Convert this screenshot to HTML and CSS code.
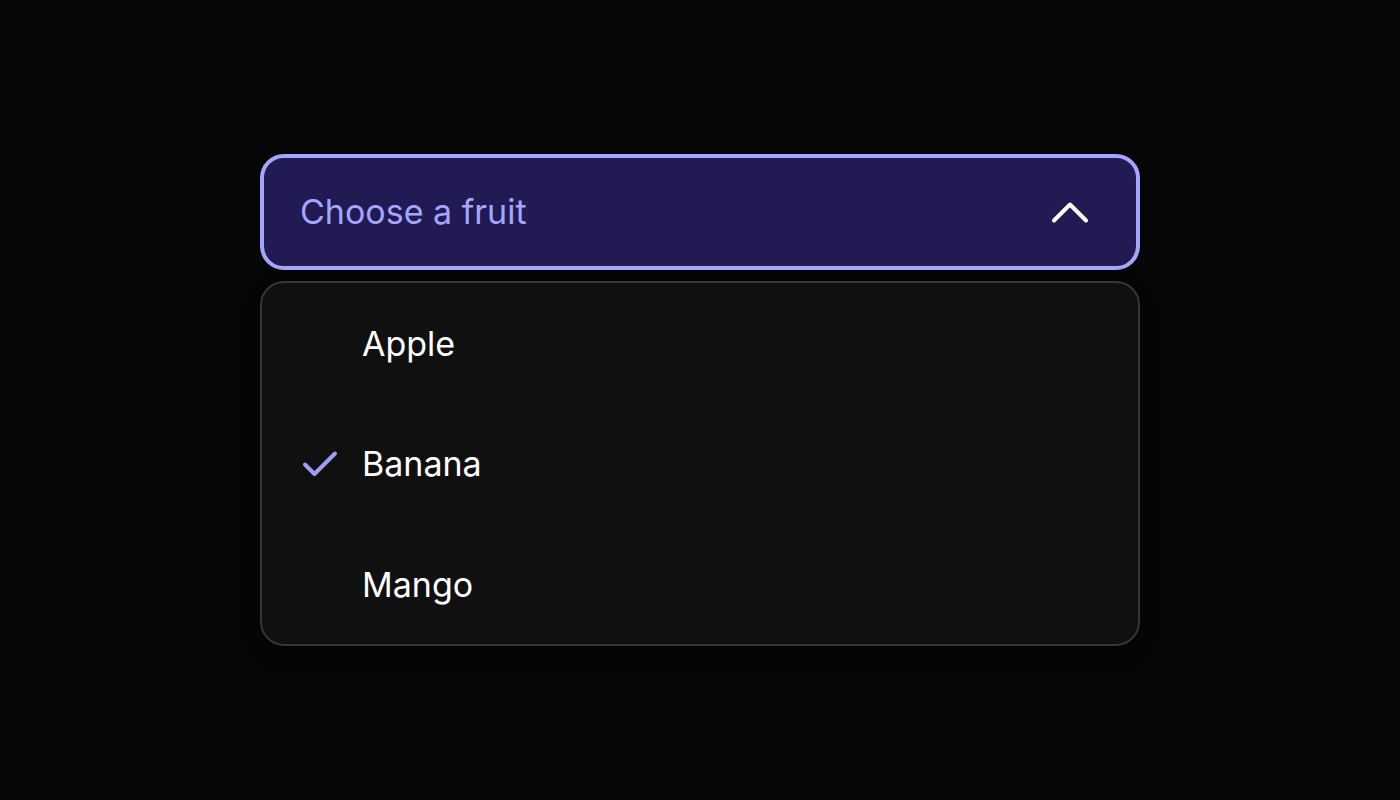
FILE: index.html
```html
<!DOCTYPE html>
<html lang="en">
<head>
<meta charset="utf-8">
<title>Select</title>
<link rel="stylesheet" href="styles.css">
</head>
<body>
<div class="page">
  <div class="select">
    <button class="trigger" type="button">
      <span class="placeholder">Choose a fruit</span>
      <svg class="chevron" width="36" height="22" viewBox="0 0 36 22" fill="none">
        <path d="M2 19.5 L18 3.5 L34 19.5" stroke="#ffffff" stroke-width="4" stroke-linecap="round" stroke-linejoin="round"/>
      </svg>
    </button>
    <ul class="menu">
      <li class="option"><span class="check"></span><span class="label">Apple</span></li>
      <li class="option selected"><span class="check">
        <svg width="36" height="28" viewBox="0 0 36 28" fill="none">
          <path d="M3 14.5 L12.5 24 L33 3.5" stroke="#9d9cf7" stroke-width="4" stroke-linecap="round" stroke-linejoin="round"/>
        </svg></span><span class="label">Banana</span></li>
      <li class="option"><span class="check"></span><span class="label">Mango</span></li>
    </ul>
  </div>
</div>
</body>
</html>
```

FILE: styles.css
```css
* { box-sizing: border-box; }
html, body { margin: 0; padding: 0; }
body {
  background: #060609;
  font-family: Inter, "Noto Sans", sans-serif;
  width: 1400px;
  height: 800px;
}
.page {
  height: 800px;
  display: flex;
  align-items: center;
  justify-content: center;
}
.select {
  width: 880px;
  display: flex;
  flex-direction: column;
  gap: 11px;
}
.trigger {
  height: 116px;
  width: 100%;
  display: flex;
  align-items: center;
  justify-content: space-between;
  padding: 0 48px 0 36px;
  background: #211a53;
  border: 4px solid #a3a6fb;
  border-radius: 24px;
  font-family: inherit;
  cursor: pointer;
}
.placeholder {
  color: #a3a6fb;
  font-size: 34px;
  font-weight: 400;
}
.chevron { display: block; }
.menu {
  list-style: none;
  margin: 0;
  padding: 0;
  background: #101010;
  border: 2px solid #363638;
  border-radius: 24px;
  box-shadow: 0 8px 20px rgba(0,0,0,0.35);
}
.option {
  height: 120.5px;
  display: flex;
  align-items: center;
  padding-left: 40px;
  gap: 24px;
  color: #ffffff;
  font-size: 34px;
}
.check {
  width: 36px;
  height: 28px;
  display: flex;
  align-items: center;
  justify-content: center;
}
.check svg { display: block; }
```
